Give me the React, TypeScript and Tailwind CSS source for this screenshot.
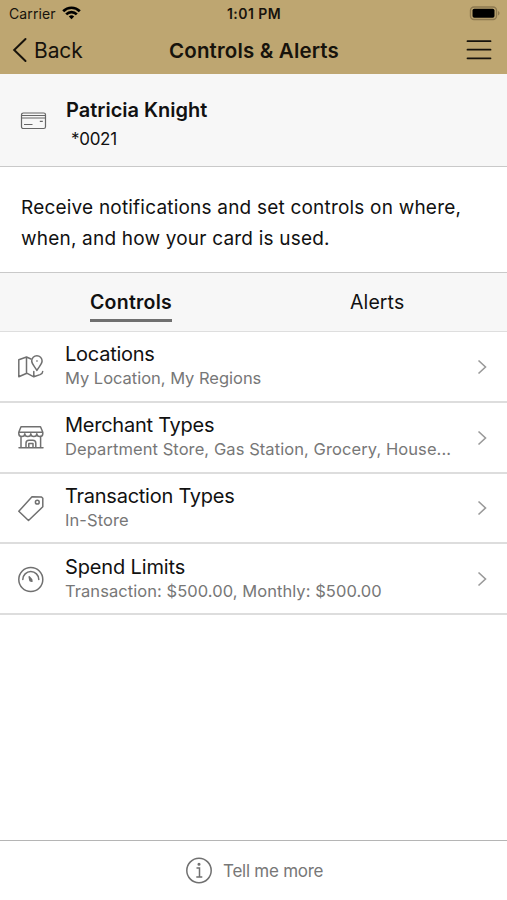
import React from "react";

const stroke = {
  fill: "none",
  stroke: "currentColor",
  strokeWidth: 1.5,
  strokeLinecap: "round" as const,
  strokeLinejoin: "round" as const,
};

function MapIcon() {
  return (
    <svg width="28" height="28" viewBox="0 0 28 28" {...stroke}>
      <path d="M15 7 10.500 5 2.800 7.800v17l8-3.600 7 3.600 6.200-2.200c1.800-.8 2.700-1.500 2.700-3.200M10.500 5v16M17.800 19.500v5.300" />
      <path d="M20.900 18.500c-1.800-3.500-5.200-6.500-5.200-9.500a5.200 5.200 0 0 1 10.400 0c0 3-3.400 6-5.200 9.500z" />
      <circle cx="20.900" cy="9" r=".2" strokeWidth="1" />
    </svg>
  );
}

function StoreIcon() {
  return (
    <svg width="28" height="28" viewBox="0 0 28 28" {...stroke}>
      <path d="M5 3.800h19.500l2.300 5.400H2.800zM2.800 9.200v1.500a3 2.800 0 0 0 6 0 3 2.800 0 0 0 6 0 3 2.800 0 0 0 6 0 3 2.800 0 0 0 6 0V9.200" />
      <path d="M5 13.500v10.700M24.600 13.500v10.700M3 24.700h24M10 24.500v-4.300a3 3 0 0 1 3-3h3.800a3 3 0 0 1 3 3v4.300M12.800 24.500v-4h4.200v4" />
    </svg>
  );
}

function TagIcon() {
  return (
    <svg width="28" height="28" viewBox="0 0 28 28" {...stroke}>
      <path d="M16 2.800 25.500 3 26.800 4.300v8.500L12.500 26.500 2.800 17.300z" />
      <circle cx="21.300" cy="8.200" r="1.900" />
    </svg>
  );
}

function GaugeIcon() {
  return (
    <svg width="28" height="28" viewBox="0 0 28 28" {...stroke}>
      <circle cx="14.800" cy="14.500" r="12" />
      <path d="M6.800 14.500a8 8 0 0 1 16 0" />
      <path d="m13.200 11.800.8 3.900 1.900.5-.3-1.800z" fill="currentColor" />
    </svg>
  );
}

const rows = [
  { title: "Locations", detail: "My Location, My Regions", icon: <MapIcon />, t: "tracking-[-0.25px]", d: "tracking-[-0.02px]" },
  { title: "Merchant Types", detail: "Department Store, Gas Station, Grocery, House...", icon: <StoreIcon />, t: "tracking-[-0.25px]", d: "tracking-[0.080px]" },
  { title: "Transaction Types", detail: "In-Store", icon: <TagIcon />, t: "tracking-[-0.25px]", d: "tracking-[0.080px]" },
  { title: "Spend Limits", detail: "Transaction: $500.00, Monthly: $500.00", icon: <GaugeIcon />, t: "tracking-[-0.14px]", d: "tracking-[0.060px]" },
];

export default function App() {
  return (
    <div className="flex h-[900px] w-[507px] flex-col overflow-hidden bg-white font-['Inter','Liberation_Sans',sans-serif] text-[#111111]">
      <header className="h-[74px] shrink-0 bg-[#bea671] text-[#17130c]">
        <div className="grid h-[27px] grid-cols-3 items-center pl-[9px] pr-[7px]">
          <div className="flex items-center gap-[6px] text-[14px] tracking-[0.1px]">
            <span>Carrier</span>
            <svg className="-mt-[2px]" width="19" height="14" viewBox="0 0 19 14" fill="none" stroke="#000" strokeWidth="2.700">
              <path d="M1.200 5.200a11.700 11.700 0 0 1 16.600 0M4.200 8.400a7.500 7.500 0 0 1 10.600 0" />
              <path d="M9.500 13.300 6.800 10.600a3.800 3.800 0 0 1 5.400 0z" fill="#000" stroke="none" />
            </svg>
          </div>
          <span className="-ml-[1px] text-center text-[14px] font-semibold tracking-[0.450px]">1:01 PM</span>
          <svg className="justify-self-end" width="31" height="15" viewBox="0 0 31 15">
            <rect x="1.500" y="1" width="26" height="12.500" rx="3.500" fill="none" stroke="#8d7950" strokeWidth="1.400" />
            <rect x="3.500" y="2.800" width="22" height="9" rx="1.800" />
            <path d="M29 5v4.500c2-.8 2-3.700 0-4.500z" fill="#8d7950" />
          </svg>
        </div>
        <div className="grid h-[46px] grid-cols-[150px_1fr_150px] items-center pl-[12px] pr-[15px]">
          <div className="flex items-center gap-[7px] text-[21px] tracking-[-0.1px]">
            <svg width="15" height="26" viewBox="0 0 15 26" fill="none" stroke="currentColor" strokeWidth="2" strokeLinecap="round">
              <path d="M13.500 2 2.200 13l11.300 11" />
            </svg>
            <span className="pt-[1px]">Back</span>
          </div>
          <h1 className="whitespace-nowrap pl-[4px] pt-[2px] text-center text-[20.500px] font-semibold tracking-[0.160px]">Controls &amp; Alerts</h1>
          <svg className="justify-self-end" width="26" height="20" viewBox="0 0 26 20" stroke="currentColor" strokeWidth="1.800" strokeLinecap="round">
            <path d="M1.500 1.200h23M1.500 9.700h23M1.500 18.300h23" />
          </svg>
        </div>
      </header>

      <section className="flex h-[93px] shrink-0 items-center border-b border-[#c9c9c9] bg-[#f7f7f7] pl-[20px]">
        <svg className="mt-[2px] text-[#666666]" width="27" height="18" viewBox="0 0 27 18" fill="none" stroke="currentColor" strokeWidth="1.200">
          <rect x="1.500" y="1" width="24" height="15.500" rx="1.800" />
          <path d="M1.500 3.500h24M1.500 6h24M4 12.500h8.500M19.800 9.400h3" />
        </svg>
        <div className="ml-[19px] pt-[8px]">
          <h2 className="text-[20px] font-semibold leading-[30px]">Patricia Knight</h2>
          <p className="pl-[5px] text-[17px] leading-[28px] tracking-[-0.3px]">*0021</p>
        </div>
      </section>

      <p className="h-[105px] shrink-0 whitespace-nowrap pl-[21px] pt-[25px] text-[19px] leading-[31px] tracking-[0.2px]">
        Receive notifications and set controls on where,
        <br />
        when, and how your card is used.
      </p>

      <nav className="grid h-[60px] shrink-0 grid-cols-[262px_1fr] border-y border-t-[#c9c9c9] border-b-[#dedede] bg-[#f7f7f7] text-[19.500px] leading-[30px]">
        <div className="flex justify-center pt-[14px]">
          <span className="h-[35px] border-b-[3px] border-[#707070] font-semibold tracking-[0.250px]">Controls</span>
        </div>
        <div className="pt-[14px] pl-[88px] tracking-[0.1px]">Alerts</div>
      </nav>

      <ul className="shrink-0">
        {rows.map((r) => (
          <li key={r.title} className="flex h-[70.800px] items-center border-b-2 border-[#dddddd] pl-[16px] pr-[18px]">
            <span className="w-[49px] shrink-0 text-[#707070]">{r.icon}</span>
            <div className="flex-1 whitespace-nowrap pb-[2px]">
              <div className={`text-[20px] leading-[26px] ${r.t}`}>{r.title}</div>
              <div className={`text-[16.500px] leading-[22px] text-[#777777] ${r.d}`}>{r.detail}</div>
            </div>
            <svg className="mt-[1px]" width="13" height="18" viewBox="0 0 13 18" fill="none" stroke="#999999" strokeWidth="1.600">
              <path d="m2.500 2.500 7 6.500-7 6.500" />
            </svg>
          </li>
        ))}
      </ul>

      <footer className="mt-auto flex h-[60px] shrink-0 items-center gap-[10px] border-t border-[#b5b5b5] pl-[185px] text-[17px] tracking-[-0.25px] text-[#777777]">
        <svg width="28" height="28" viewBox="0 0 28 28" fill="none" stroke="#707070" strokeWidth="1.500">
          <circle cx="14" cy="13.500" r="12.200" />
          <path d="M11.500 11h3v8.800M11.300 20h6" />
          <circle cx="14" cy="7.300" r=".8" fill="#707070" />
        </svg>
        <span className="pt-[2px]">Tell me more</span>
      </footer>
    </div>
  );
}
